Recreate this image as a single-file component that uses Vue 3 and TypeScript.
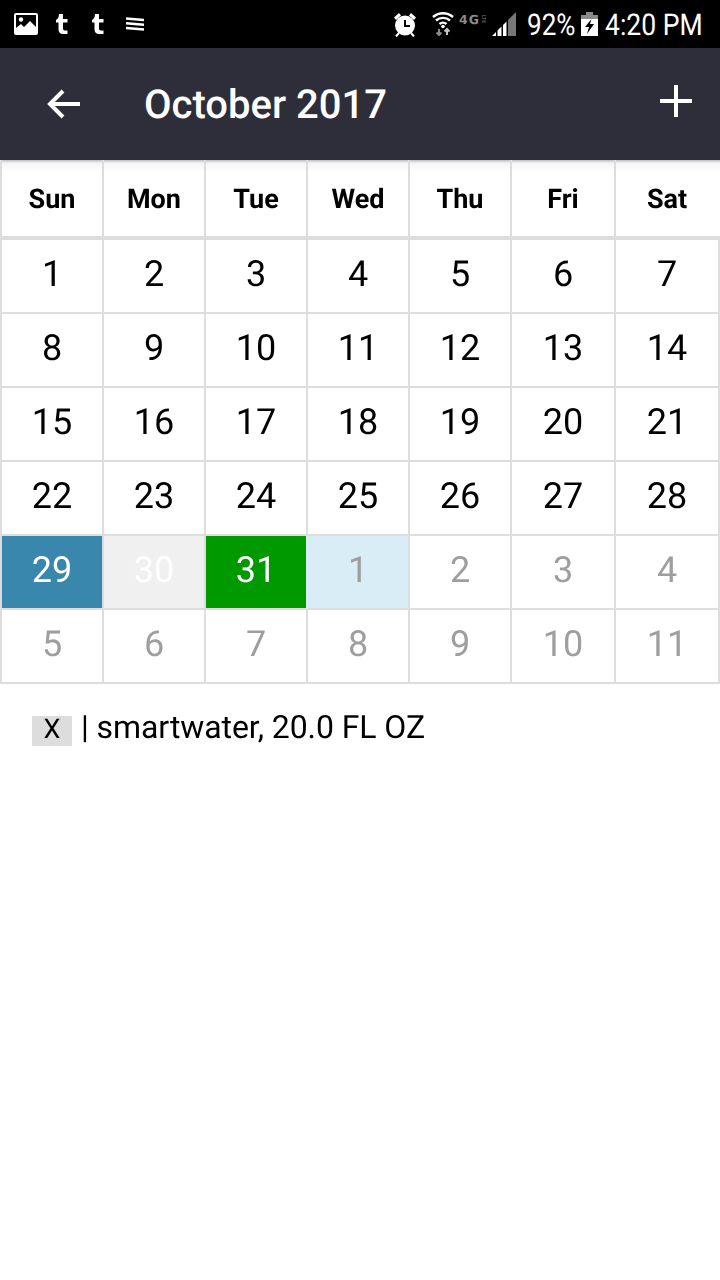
<script setup lang="ts">
interface Day {
  label: number
  kind: string
}

const weekdays = ['Sun', 'Mon', 'Tue', 'Wed', 'Thu', 'Fri', 'Sat']

const special: Record<number, string> = {
  28: 'blue',
  29: 'grey',
  30: 'green',
  31: 'pale',
}

const days: Day[] = []
for (let i = 0; i < 42; i++) {
  const label = i < 31 ? i + 1 : i - 30
  const base = i < 31 ? '' : 'muted'
  days.push({ label, kind: special[i] ? special[i] + ' ' + base : base })
}
</script>

<template>
  <div class="page">
    <div class="status">
      <div class="status-left">
        <svg width="24" height="22" viewBox="0 0 24 22">
          <rect width="24" height="22" rx="2" fill="#fff" />
          <rect x="2" y="2" width="20" height="18" fill="#000" />
          <circle cx="7" cy="6.500" r="2.200" fill="#fff" />
          <path d="M2 15l5-4 3 3 6-6 6 6v6H2z" fill="#fff" />
        </svg>
        <svg class="tumblr" width="12" height="20" viewBox="0 0 12 20">
          <path d="M3 0h4v5h4.500v3.500H7v6c0 1.500 1 2 2 2h2.500V20H7c-3 0-4.500-2-4.500-4.500v-7H0V6c2-1 3-3 3-6z" fill="#fff" />
        </svg>
        <svg class="tumblr" width="12" height="20" viewBox="0 0 12 20">
          <path d="M3 0h4v5h4.500v3.500H7v6c0 1.500 1 2 2 2h2.500V20H7c-3 0-4.500-2-4.500-4.500v-7H0V6c2-1 3-3 3-6z" fill="#fff" />
        </svg>
        <svg class="waves" width="18" height="14" viewBox="0 0 18 14">
          <path d="M0 1.500l18 1.500M0 6.200l18 1.500M0 11l18 1.500" stroke="#fff" stroke-width="2.600" fill="none" />
        </svg>
      </div>
      <div class="status-right">
        <svg width="24" height="25" viewBox="0 0 24 25">
          <circle cx="12" cy="13.500" r="10" fill="#fff" />
          <path d="M12 8v6h5" stroke="#000" stroke-width="2" fill="none" />
          <path d="M1 5.500L6 1l2 2.500L3 8zM23 5.500L18 1l-2 2.500L21 8z" fill="#fff" />
          <path d="M6 21l-3 3.500M18 21l3 3.500" stroke="#fff" stroke-width="2" fill="none" />
        </svg>
        <svg class="wifi" width="22" height="24" viewBox="0 0 22 24">
          <path d="M1 5c6-5 14-5 20 0M4 8.500c4-3.500 10-3.500 14 0M7.500 12c2-1.800 5-1.800 7 0" stroke="#fff" stroke-width="2.400" fill="none" />
          <circle cx="11" cy="14.500" r="1.800" fill="#fff" />
          <path d="M7 17v6M4.500 20.500L7 23l2.500-2.500" stroke="#8a8a8a" stroke-width="2" fill="none" />
          <path d="M15 23v-6M12.500 19.500L15 17l2.500 2.500" stroke="#c4c4c4" stroke-width="2" fill="none" />
        </svg>
        <span class="net"><b>4G</b><small>LTE</small></span>
        <svg class="signal" width="24" height="24" viewBox="0 0 24 24">
          <path d="M0 24l4-4v4zM5.500 24v-5.500l4-4V24zM11 24V13l3.500-3.500V24z" fill="#fff" />
          <path d="M16 24V8l8-8v24z" fill="#777" />
        </svg>
        <span class="pct">92%</span>
        <svg class="battery" width="17" height="24" viewBox="0 0 17 24">
          <path d="M5 0h7v3h5v21H0V3h5z" fill="#fff" />
          <path d="M5 0h7v3h5v4H0V3h5z" fill="#8a8a8a" />
          <path d="M10.500 7L4 15h4L6 22l7-10H9z" fill="#000" />
        </svg>
        <span class="time">4:20 PM</span>
      </div>
    </div>

    <header class="toolbar">
      <svg class="back" width="36" height="32" viewBox="0 0 36 32">
        <path d="M34 16H4M17 3L4 16l13 13" stroke="#fff" stroke-width="4" fill="none" />
      </svg>
      <h1 class="title">October 2017</h1>
      <svg class="add" width="34" height="34" viewBox="0 0 34 34">
        <path d="M17 1v32M1 17h32" stroke="#fff" stroke-width="4" fill="none" />
      </svg>
    </header>

    <div class="calendar">
      <div class="head-row">
        <div v-for="day in weekdays" :key="day" class="head-cell">{{ day }}</div>
      </div>
      <div class="day-grid">
        <div v-for="(d, i) in days" :key="i" class="day-cell" :class="d.kind">{{ d.label }}</div>
      </div>
    </div>

    <div class="entry">
      <span class="remove">X</span>
      <span class="entry-text">| smartwater, 20.0 FL OZ</span>
    </div>
  </div>
</template>

<style>
html,
body {
  margin: 0;
  background: #fff;
}
</style>

<style scoped>
.page {
  width: 720px;
  height: 1280px;
  overflow: hidden;
  background: #fff;
  font-family: Roboto, "Liberation Sans", sans-serif;
  color: #000;
  text-rendering: geometricPrecision;
}

.status {
  height: 48px;
  background: #000;
  display: flex;
  align-items: center;
  justify-content: space-between;
  padding: 0 17px 0 14px;
  color: #fff;
}

.status-left,
.status-right {
  display: flex;
  align-items: center;
}

.tumblr {
  margin-left: 18px;
}

.tumblr + .tumblr {
  margin-left: 24px;
}

.waves {
  margin-left: 22px;
}

.wifi {
  margin-left: 15px;
}

.net {
  display: flex;
  align-items: center;
  width: 28px;
  margin-left: 5px;
  margin-top: -9px;
  line-height: 10px;
  font-family: "DejaVu Sans", sans-serif;
  color: #8a8a8a;
}

.net b {
  font-size: 12.500px;
  letter-spacing: 1px;
}

.net small {
  writing-mode: vertical-rl;
  font-size: 5px;
  line-height: 5px;
}

.signal {
  margin-left: 5px;
}

.pct,
.time {
  display: inline-block;
  margin-top: 4px;
  font-size: 30px;
  line-height: 34px;
  white-space: nowrap;
  transform-origin: left center;
}

.pct {
  width: 48px;
  margin-left: 11px;
  transform: scaleX(0.87);
}

.battery {
  margin-left: 6px;
}

.time {
  width: 98px;
  margin-left: 7px;
  transform: scaleX(0.885);
}

.toolbar {
  height: 112px;
  background: #2e2d3a;
  display: flex;
  align-items: center;
  padding: 0 27px 0 46px;
  box-sizing: border-box;
}

.title {
  margin: 0 0 0 62px;
  flex: 1;
  font-size: 40px;
  font-weight: 500;
  color: #fff;
}

.add {
  margin-top: -6px;
}

.calendar {
  display: flex;
  flex-direction: column;
  will-change: transform;
}

.head-row,
.day-grid {
  display: grid;
  grid-template-columns: repeat(5, 102px) 104px 106px;
  width: 720px;
}

.head-row {
  height: 76px;
  border-bottom: 4px solid #ddd;
  background: linear-gradient(#bdbdbd, #f4f4f4 3px, #fff 12px);
}

.head-cell {
  display: flex;
  align-items: center;
  justify-content: center;
  border-left: 2px solid #ddd;
  box-sizing: border-box;
  padding-top: 2px;
  font-size: 27px;
  font-weight: 700;
}

.head-cell:last-child {
  border-right: 2px solid transparent;
}

.day-cell:nth-child(7n) {
  border-right: 2px solid #ddd;
}

.day-grid {
  grid-auto-rows: 74px;
}

.day-cell {
  display: flex;
  align-items: center;
  justify-content: center;
  box-sizing: border-box;
  padding-bottom: 4px;
  border-left: 2px solid #ddd;
  border-bottom: 2px solid #ddd;
  font-size: 36px;
}

.muted {
  color: #9e9e9e;
}

.blue {
  background: #3a87ad;
  color: #fff;
}

.grey {
  background: #f0f0f0;
  color: #fff;
}

.green {
  background: #009900;
  color: #fff;
}

.pale {
  background: #d9edf7;
  border-left-color: #d9edf7;
}

.entry {
  display: flex;
  align-items: center;
  padding: 24px 0 0 32px;
  font-size: 32px;
  letter-spacing: -0.08px;
  will-change: transform;
}

.remove {
  width: 40px;
  height: 30px;
  background: #ddd;
  font-size: 27px;
  line-height: 27px;
  text-align: center;
  margin-top: 8px;
}

.entry-text {
  margin-left: 9px;
}
</style>
